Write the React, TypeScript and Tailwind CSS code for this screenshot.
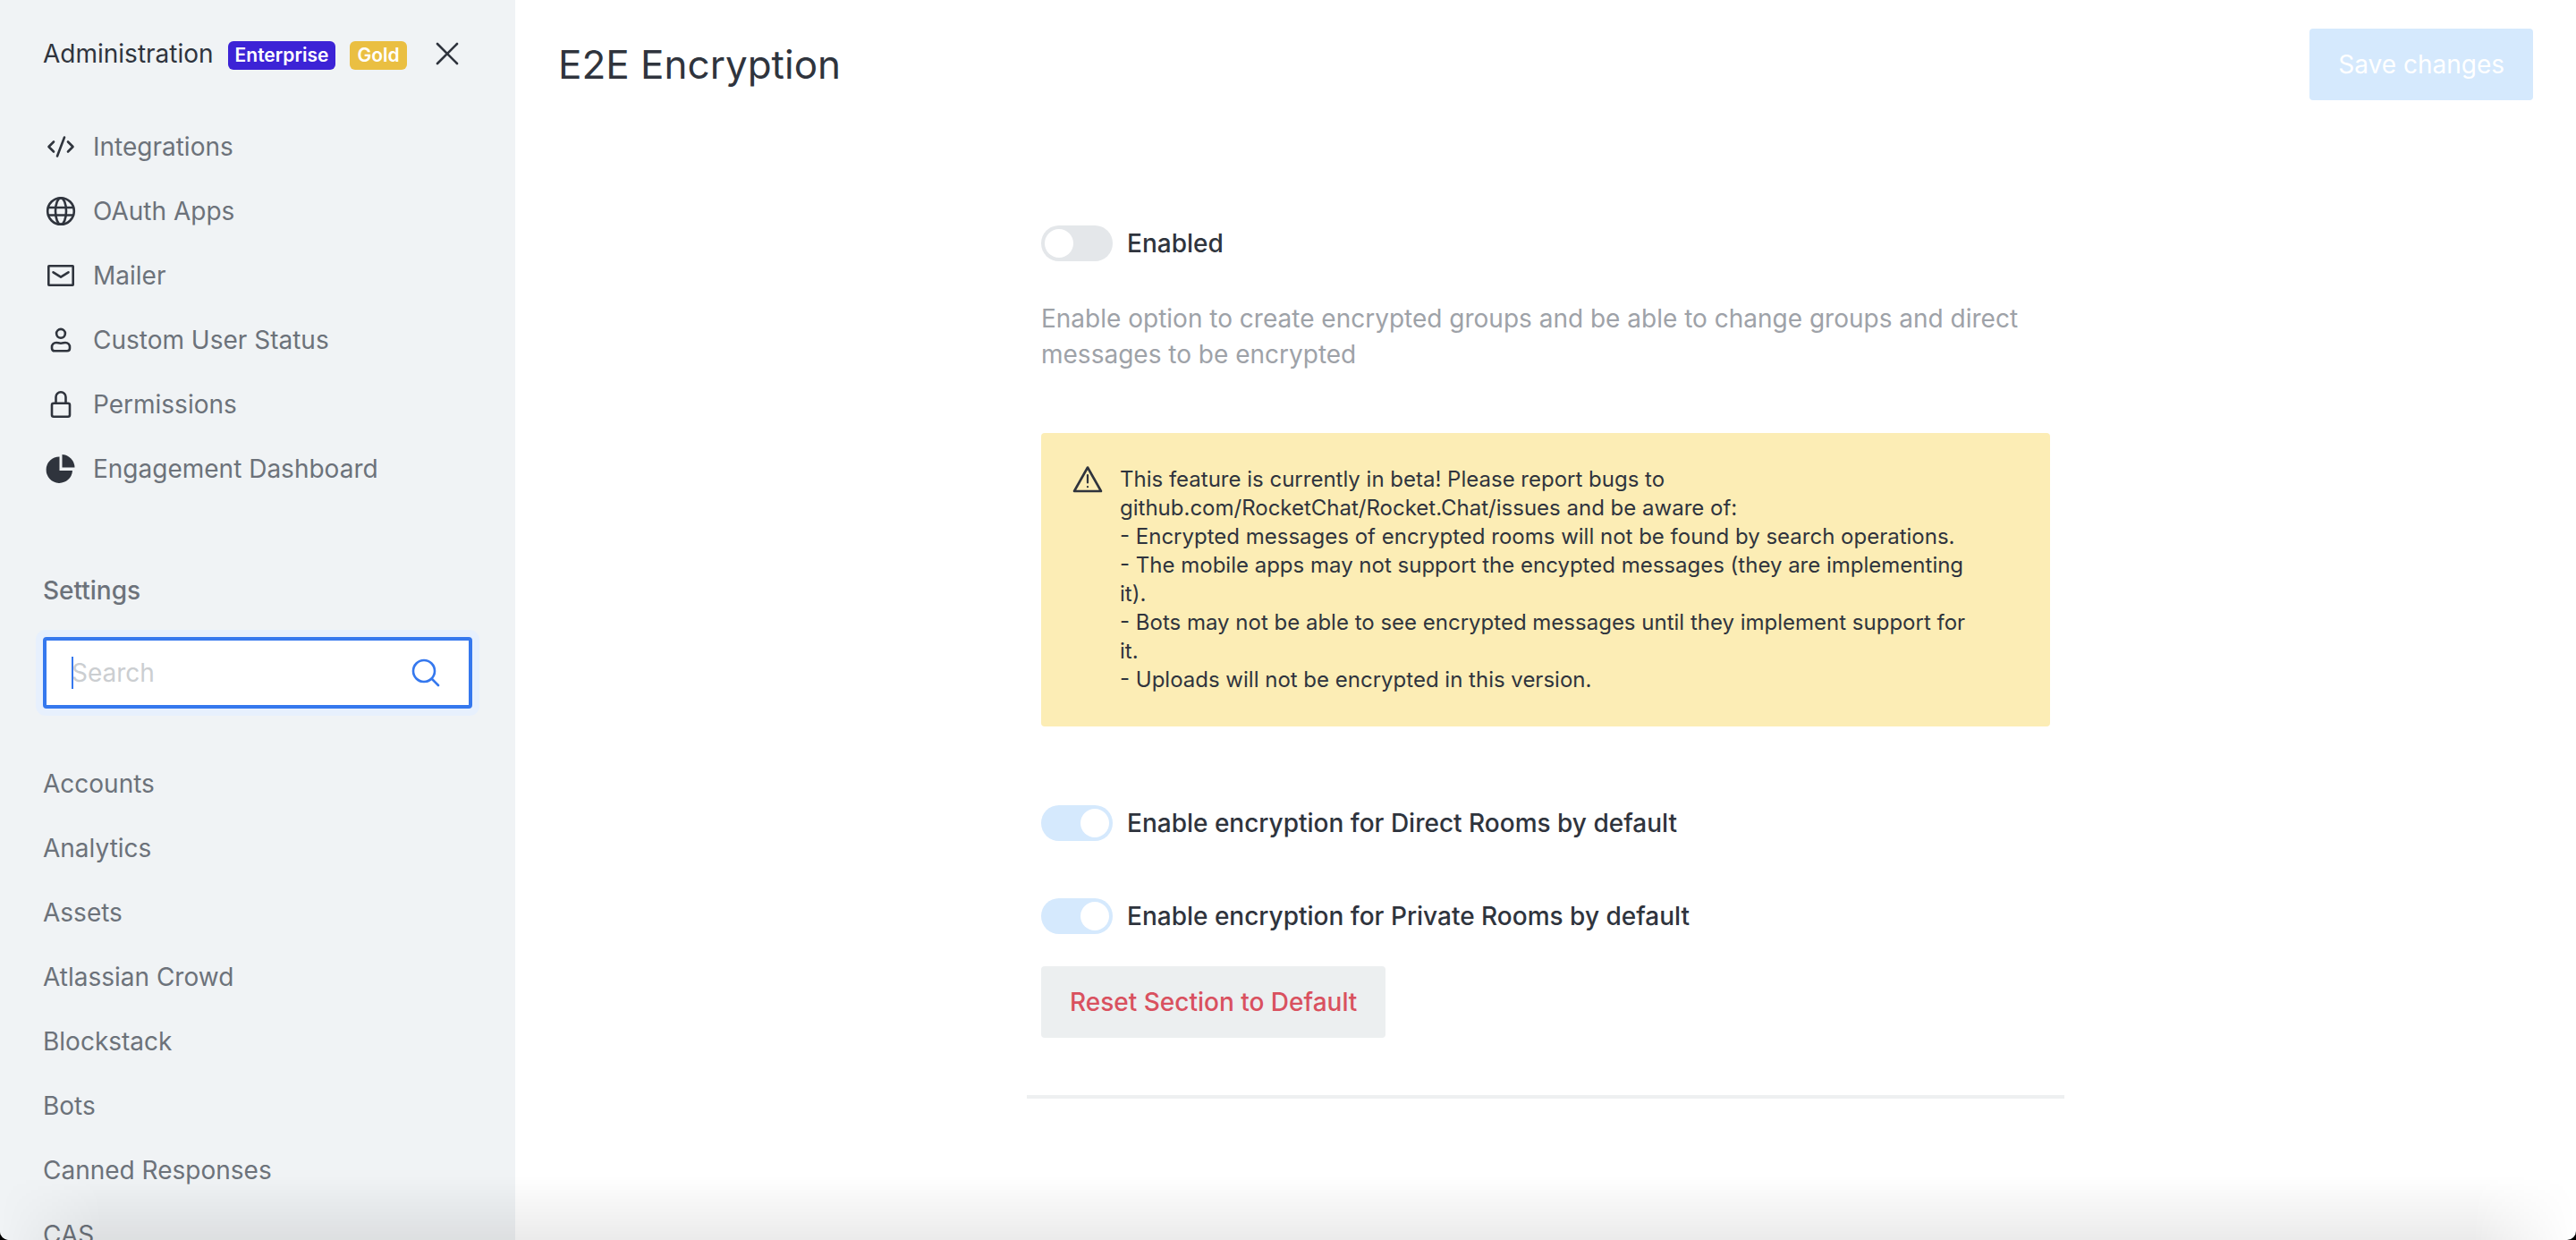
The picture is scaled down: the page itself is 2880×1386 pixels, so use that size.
import type { ReactNode } from "react";

function Icon({ children, className = "" }: { children: ReactNode; className?: string }) {
  return (
    <svg
      viewBox="0 0 40 40"
      aria-hidden="true"
      className={`size-10 shrink-0 ${className}`}
      fill="none"
      stroke="currentColor"
      strokeWidth="2.6"
      strokeLinecap="round"
      strokeLinejoin="round"
    >
      {children}
    </svg>
  );
}

const navItems: { label: string; icon: ReactNode }[] = [
  {
    label: "Integrations",
    icon: <path d="M12 14.5 6.500 20l5.500 5.500M28 14.500l5.500 5.500-5.500 5.500M24 9.500l-8 21" />,
  },
  {
    label: "OAuth Apps",
    icon: (
      <>
        <circle cx="20" cy="20" r="14.800" />
        <ellipse cx="20" cy="20" rx="6" ry="14.800" />
        <path d="M6 16h28M6 24.500h28" />
      </>
    ),
  },
  {
    label: "Mailer",
    icon: (
      <>
        <rect x="6.300" y="9.300" width="27.400" height="21.400" rx="0.500" />
        <path d="m11.500 16.300 8.500 5.400 8.500-5.400" />
      </>
    ),
  },
  {
    label: "Custom User Status",
    icon: (
      <>
        <circle cx="20" cy="12.800" r="4.900" />
        <path d="M15 23c1.800 0 2.500.7 5 .7s3.200-.7 5-.7c3 0 5 2.300 5 5v1.300c0 1.800-1.200 3-3 3H13c-1.800 0-3-1.200-3-3V28c0-2.700 2-5 5-5Z" />
      </>
    ),
  },
  {
    label: "Permissions",
    icon: (
      <>
        <rect x="10" y="18.800" width="20" height="15" rx="2" />
        <path d="M14.500 18v-6.200a5.500 5.500 0 0 1 11 0V18" />
      </>
    ),
  },
  {
    label: "Engagement Dashboard",
    icon: (
      <g fill="currentColor" stroke="none">
        <path d="M18.500 6.500A14.700 14.700 0 1 0 33 22H18.500Z" />
        <path d="M21.500 4A15 15 0 0 1 35.500 18.500h-14Z" />
      </g>
    ),
  },
];

const settings = [
  "Accounts",
  "Analytics",
  "Assets",
  "Atlassian Crowd",
  "Blockstack",
  "Bots",
  "Canned Responses",
  "CAS",
];

const notices = [
  "This feature is currently in beta! Please report bugs to github.com/RocketChat/Rocket.Chat/issues and be aware of:",
  "- Encrypted messages of encrypted rooms will not be found by search operations.",
  "- The mobile apps may not support the encypted messages (they are implementing it).",
  "- Bots may not be able to see encrypted messages until they implement support for it.",
  "- Uploads will not be encrypted in this version.",
];

function Toggle({ id, label, on = false }: { id: string; label: string; on?: boolean }) {
  return (
    <label htmlFor={id} className="flex items-center gap-4 font-medium">
      <input id={id} type="checkbox" role="switch" defaultChecked={on} className="peer sr-only" />
      <span className="flex h-10 w-20 rounded-full bg-[#e4e7ea] p-1 peer-checked:justify-end peer-checked:bg-[#d5e9fd]">
        <span className="size-8 rounded-full bg-white" />
      </span>
      {label}
    </label>
  );
}

function Sidebar() {
  return (
    <aside className="w-144 shrink-0 overflow-hidden bg-[#f0f3f5] text-[#6c727a]">
      <header className="flex h-30 items-center gap-4 px-12 text-[#2f343d]">
        <h2>Administration</h2>
        <span className="mt-1 flex h-8 items-center rounded-md bg-[#3c23d6] px-2 text-[21px] font-semibold text-white">
          Enterprise
        </span>
        <span className="mt-1 flex h-8 items-center rounded-md bg-[#eabf42] px-2 text-[21px] font-semibold text-white">
          Gold
        </span>
        <button type="button" aria-label="Close" className="mr-2 ml-auto">
          <Icon>
            <path d="m9 9 22 22M31 9 9 31" />
          </Icon>
        </button>
      </header>
      <nav aria-label="Administration" className="pt-2">
        {navItems.map((item) => (
          <a key={item.label} href="#" className="flex h-18 items-center gap-4 px-12">
            <Icon className="text-[#2f343d]">{item.icon}</Icon>
            {item.label}
          </a>
        ))}
      </nav>
      <section className="px-12 pt-20">
        <h3 className="font-medium">Settings</h3>
        <label
          htmlFor="settings-search"
          className="relative mt-8 flex h-20 items-center rounded-sm border-4 border-[#3578ee] bg-white px-7 shadow-[0_0_0_8px_#e7f0fd]"
        >
          <input
            id="settings-search"
            type="text"
            aria-label="Search settings"
            placeholder="Search"
            className="min-w-0 flex-1 caret-[#3578ee] outline-none placeholder:text-[#cbced1]"
          />
          <span aria-hidden="true" className="absolute left-7 h-9 w-0.5 bg-[#3578ee]" />
          <Icon className="text-[#3578ee]">
            <circle cx="18" cy="18" r="12" />
            <path d="m27 27 7 7" />
          </Icon>
        </label>
      </section>
      <nav aria-label="Settings" className="pt-12">
        {settings.map((name) => (
          <a key={name} href="#" className="flex h-18 items-center px-12">
            {name}
          </a>
        ))}
      </nav>
    </aside>
  );
}

export default function App() {
  return (
    <div className="h-screen bg-black font-['Inter',sans-serif] text-[28px] leading-10 text-[#2f343d]">
      <div className="relative flex h-full overflow-hidden rounded-b-[10px] bg-white">
        <Sidebar />
        <main className="min-w-0 flex-1">
          <header className="flex h-36 items-center justify-between px-12">
            <h1 className="text-[44px] leading-16">E2E Encryption</h1>
            <button type="button" disabled className="h-20 rounded-sm bg-[#d5e9fd] px-8 text-white">
              Save changes
            </button>
          </header>
          <section className="mx-auto mt-27 max-w-290 border-b-4 border-[#eef0f1] px-4 pb-16">
            <Toggle id="e2e-enabled" label="Enabled" />
            <p className="mt-11 text-[#9ea2a8]">
              Enable option to create encrypted groups and be able to change groups and direct messages to be
              encrypted
            </p>
            <div role="note" className="mt-17 flex gap-4 rounded-sm bg-[#fcedb5] p-9 pl-8 text-2xl">
              <Icon className="-mt-1">
                <path d="M20 6.500 35 33H5Z" />
                <path d="M20 15v8.500M20 28v.2" strokeWidth="2.2" />
              </Icon>
              <div className="mr-10">
                {notices.map((line) => (
                  <p key={line}>{line}</p>
                ))}
              </div>
            </div>
            <div className="mt-22 flex flex-col gap-16">
              <Toggle id="e2e-direct" label="Enable encryption for Direct Rooms by default" on />
              <Toggle id="e2e-private" label="Enable encryption for Private Rooms by default" on />
            </div>
            <button type="button" className="mt-9 h-20 rounded-sm bg-[#eceff0] px-8 font-medium text-[#d9515f]">
              Reset Section to Default
            </button>
          </section>
        </main>
        <div className="pointer-events-none absolute inset-x-0 bottom-0 h-18 bg-linear-to-t from-black/8 to-transparent mask-x-from-96% mask-x-to-100%" />
      </div>
    </div>
  );
}
